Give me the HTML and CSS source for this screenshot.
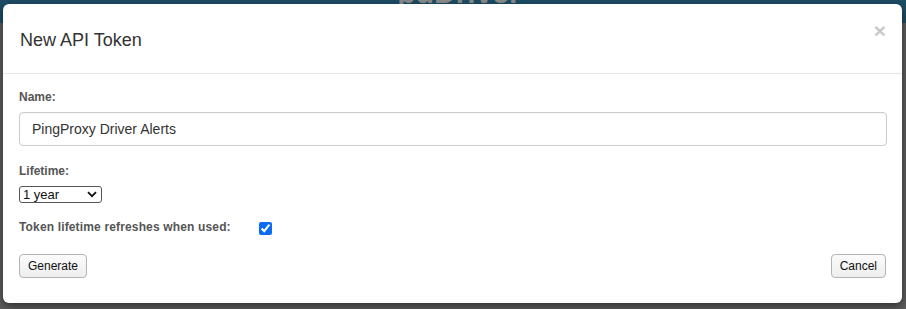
FILE: index.html
```
<!DOCTYPE html>
<html>
<head>
<meta charset="utf-8">
<link rel="stylesheet" href="styles.css">
</head>
<body>
<div class="page">
  <div class="topbar"><div class="brand">pdDriver</div></div>
  <div class="page-text">
    <p>r</p><p>n</p><p>l</p><p class="b">b</p><p>ii</p>
  </div>
</div>
<div class="modal">
  <div class="modal-header">
    <h4 class="modal-title">New API Token</h4>
    <span class="close">&times;</span>
  </div>
  <div class="modal-body">
    <div class="group">
      <label class="lbl">Name:</label>
      <input class="text-input" type="text" value="PingProxy Driver Alerts">
    </div>
    <div class="group">
      <label class="lbl">Lifetime:</label>
      <span class="select-wrap">
        <select class="sel"><option>1 year</option></select>
        <svg class="chev" width="10" height="7" viewBox="0 0 10 7"><path d="M1 1.2 L5 5.2 L9 1.2" fill="none" stroke="#111" stroke-width="1.8"/></svg>
      </span>
    </div>
    <div class="group row">
      <label class="lbl inline">Token lifetime refreshes when used:</label>
      <input class="chk" type="checkbox" checked>
    </div>
    <div class="actions">
      <button class="btn">Generate</button>
      <button class="btn">Cancel</button>
    </div>
  </div>
</div>
</body>
</html>
```
FILE: styles.css
```
html, body {
  margin: 0;
  padding: 0;
}
body {
  background: #5d5d5d;
  width: 906px;
  height: 309px;
  overflow: hidden;
  font-family: "Liberation Sans", Arial, sans-serif;
}
.page {
  height: 309px;
}
.topbar {
  height: 23px;
  background: #1c4d65;
  overflow: hidden;
}
.brand {
  margin-top: -22px;
  text-align: center;
  padding-left: 12px;
  font-size: 30px;
  line-height: 30px;
  font-weight: bold;
  color: #8c8c8c;
}
.page-text {
  margin-left: -8px;
  padding-top: 58px;
  font-size: 13px;
  color: #1a1a1a;
}
.page-text p {
  margin: 0 0 15px 0;
  line-height: 16px;
}
.page-text .b { font-weight: bold; }
.modal {
  position: absolute;
  top: 4px;
  left: 3px;
  width: 899px;
  height: 299px;
  background: #fff;
  border-radius: 6px;
  box-shadow: 0 3px 9px rgba(0,0,0,0.5);
}
.modal-header {
  display: flex;
  justify-content: space-between;
  align-items: flex-start;
  padding: 23px 16px 20px 17px;
  border-bottom: 1px solid #e5e5e5;
}
.modal-title {
  margin: 0;
  font-size: 18px;
  line-height: 26px;
  font-weight: normal;
  color: #333;
}
.close {
  font-size: 21px;
  line-height: 21px;
  font-weight: bold;
  color: #c8c8c8;
  margin-top: -7px;
}
.modal-body {
  padding: 15px 16px 0 16px;
}
.group {
  display: flex;
  flex-direction: column;
  align-items: flex-start;
}
.lbl {
  font-size: 12px;
  line-height: 17px;
  font-weight: bold;
  color: #555;
  margin-bottom: 6px;
}
.text-input {
  box-sizing: border-box;
  width: 868px;
  height: 34px;
  margin: 0 0 17px 0;
  padding: 0 12px;
  border: 1px solid #ccc;
  border-radius: 4px;
  font-family: "Liberation Sans", Arial, sans-serif;
  font-size: 14px;
  color: #333;
  outline: none;
  box-shadow: inset 0 1px 1px rgba(0,0,0,0.04);
}
.select-wrap {
  position: relative;
  display: inline-flex;
  margin-bottom: 16px;
}
.sel {
  -webkit-appearance: none;
  appearance: none;
  box-sizing: border-box;
  width: 83px;
  height: 17px;
  margin: 0;
  padding: 0 0 0 3px;
  border: 1px solid #555;
  border-radius: 3px;
  background: #fff;
  font-family: "Liberation Sans", Arial, sans-serif;
  font-size: 13px;
  line-height: 15px;
  color: #111;
}
.chev {
  position: absolute;
  right: 5px;
  top: 5px;
  pointer-events: none;
}
.row {
  flex-direction: row;
  align-items: center;
  margin-bottom: 18px;
}
.lbl.inline {
  margin-bottom: 0;
  letter-spacing: 0.15px;
}
.chk {
  width: 13px;
  height: 13px;
  margin: 1px 0 0 28px;
  accent-color: #0b6cf4;
}
.actions {
  display: flex;
  justify-content: space-between;
}
.btn {
  box-sizing: border-box;
  height: 24px;
  padding: 0 8px;
  border: 1px solid #b4b4b4;
  border-radius: 4px;
  background: linear-gradient(#fbfbfb, #eeeeee);
  font-family: "Liberation Sans", Arial, sans-serif;
  font-size: 12px;
  color: #111;
}
```
